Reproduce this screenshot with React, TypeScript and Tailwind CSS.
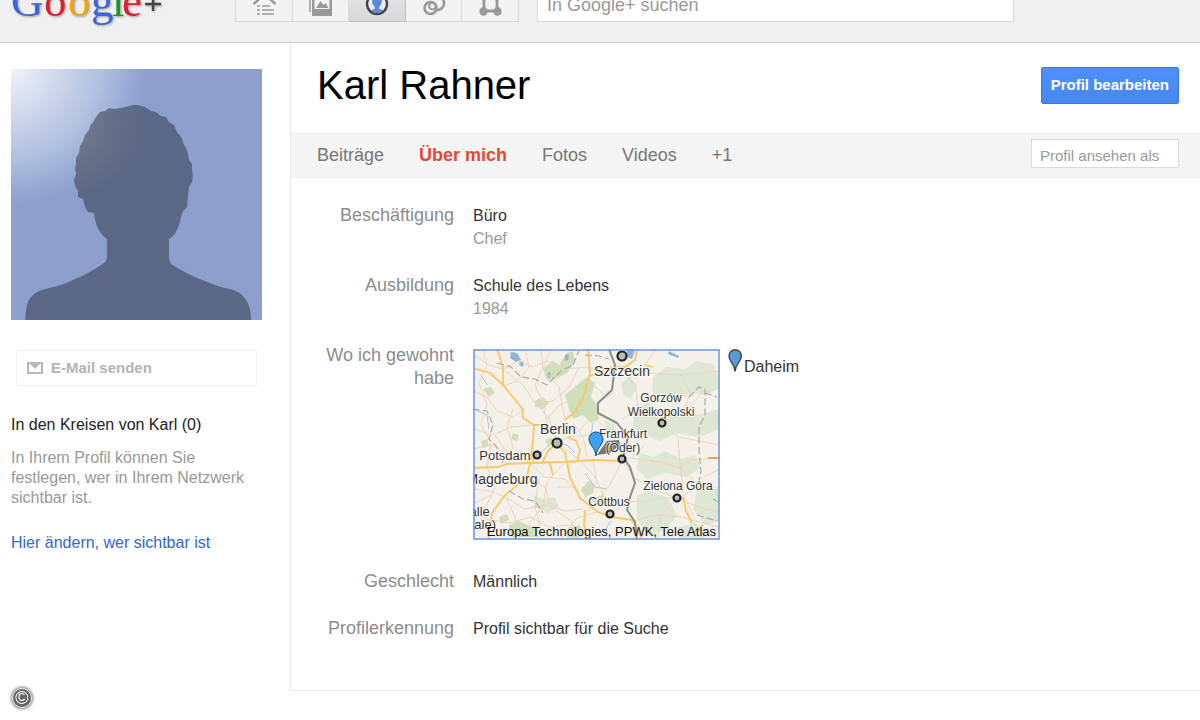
import type { ReactNode } from 'react';
import clsx from 'clsx';

const tabs = ['Beiträge', 'Über mich', 'Fotos', 'Videos', '+1'];

const logoLetters = [
  { char: 'G', x: 11, fill: '#3b66d6' },
  { char: 'o', x: 44, fill: '#dc1f33' },
  { char: 'o', x: 68, fill: '#f5a300' },
  { char: 'g', x: 91, fill: '#3b66d6' },
  { char: 'l', x: 112, fill: '#129a2c' },
  { char: 'e', x: 122, fill: '#dc1f33' },
];

function Logo() {
  return (
    <svg
      role="img"
      aria-label="Google+"
      viewBox="0 0 170 60"
      className="h-[60px] w-[170px] shrink-0 drop-shadow-[1px_1px_1px_rgba(0,0,0,0.35)]"
      fontFamily='"Liberation Serif", serif'
      fontSize="45"
    >
      {logoLetters.map((l) => (
        <text key={l.x} x={l.x} y="46" fill={l.fill}>
          {l.char}
        </text>
      ))}
      <path d="M145 34h16M153 26v15" stroke="#444" strokeWidth="2.4" />
    </svg>
  );
}

const navItems: { label: string; active?: boolean; icon: ReactNode }[] = [
  {
    label: 'Startseite',
    icon: (
      <>
        <path d="M1.500 12 12.500 2.500 23.500 12" fill="none" stroke="#999" strokeWidth="2.500" />
        <path d="M5 14h3M5 18h3M5 22h3M10 14h8M10 18h12M10 22h12" stroke="#999" strokeWidth="1.600" />
      </>
    ),
  },
  {
    label: 'Fotos',
    icon: (
      <>
        <path d="M2 2v18" stroke="#999" strokeWidth="1.500" />
        <path d="M4 3h20v21H4z" fill="#999" />
        <path d="M6.500 5h15v12h-15z" fill="#f3f3f3" />
        <path d="m8 16 4.500-7 3 4 2-2 3 5z" fill="#999" />
      </>
    ),
  },
  {
    label: 'Profil',
    active: true,
    icon: (
      <>
        <circle cx="12" cy="12" r="10" fill="#e8eefa" stroke="#444" strokeWidth="2.400" />
        <path
          d="M12 4c-3.500 0-5 2.500-4.800 5.500.2 2.500 1 4 2.600 5.200v2L5.500 18.500c3.500 3.200 9.500 3.200 13 0l-4.300-1.800v-2c1.600-1.200 2.400-2.700 2.600-5.200C17 6.500 15.500 4 12 4z"
          fill="#5c8ad6"
        />
      </>
    ),
  },
  {
    label: 'Circles',
    icon: (
      <g fill="none" stroke="#999" strokeWidth="2.600">
        <circle cx="8.500" cy="16" r="6" />
        <circle cx="10.500" cy="14" r="3.400" strokeWidth="2" />
        <path d="M8.500 7.500A7.200 7.200 0 1 1 15 18.200" />
      </g>
    ),
  },
  {
    label: 'Spiele',
    icon: (
      <>
        <path d="M6 5h13v14H6z" fill="none" stroke="#999" strokeWidth="3" />
        <g fill="#999">
          <circle cx="5.500" cy="4" r="4" />
          <circle cx="19.500" cy="4" r="4" />
          <circle cx="5.500" cy="19.500" r="4.200" />
          <circle cx="19.500" cy="19.500" r="4.200" />
        </g>
        <circle cx="12.500" cy="12" r="5" fill="#f3f3f3" />
      </>
    ),
  },
];

function TopBar() {
  return (
    <header className="flex h-[43px] items-end overflow-hidden border-b border-[#d2d2d2] bg-[#f0f0f0] pb-5">
      <div className="flex w-[235px] shrink-0 items-end">
        {/* the logo's descender hangs below the toolbar line */}
        <div className="-mb-2">
          <Logo />
        </div>
      </div>
      <nav className="flex w-[284px] shrink-0 border-l border-[#d9d9d9]">
        {navItems.map((item) => (
          <button
            key={item.label}
            type="button"
            aria-label={item.label}
            className={clsx(
              'flex h-9 flex-1 items-center justify-center border-r border-b',
              item.active
                ? 'border-[#bdbdbd] bg-linear-to-b from-[#e8e8e8] to-[#d8d8d8]'
                : 'border-[#d9d9d9] bg-[#f3f3f3]',
            )}
          >
            <svg viewBox="0 0 24 24" className="size-6 overflow-visible">
              {item.icon}
            </svg>
          </button>
        ))}
      </nav>
      <input
        type="search"
        aria-label="In Google+ suchen"
        placeholder="In Google+ suchen"
        className="mr-[186px] ml-[18px] h-9 min-w-0 flex-1 border border-[#d9d9d9] bg-white px-[9px] pt-0.5 text-lg leading-6 placeholder:text-[#999]"
      />
    </header>
  );
}

function Avatar() {
  return (
    <svg viewBox="0 0 251 251" className="block w-full" role="img" aria-label="Profilbild">
      <defs>
        <radialGradient id="glow" gradientUnits="userSpaceOnUse" cx="0" cy="0" r="135">
          <stop offset="0" stopColor="#f1f3fa" />
          <stop offset="0.300" stopColor="#d3dbed" />
          <stop offset="0.650" stopColor="#b1c1e0" />
          <stop offset="1" stopColor="#8c9fcd" />
        </radialGradient>
        <radialGradient id="hair" gradientUnits="userSpaceOnUse" cx="60" cy="55" r="75">
          <stop offset="0" stopColor="#737c8c" />
          <stop offset="1" stopColor="#5a6785" />
        </radialGradient>
      </defs>
      <path d="M0 0h251v251H0z" fill="url(#glow)" />
      <path
        fill="url(#hair)"
        d="M122 36l-8 2-10 2-6-1-4 3-5 1-4 5-3 5-3 4-1 4-4 5-2 6-3 5-1 7-3 5v6l-1 5 1 5-2 6 1 6 3 5v6l5 2 2 8 3 5 6 1c1 9 4 20 13 26v16q0 6-3 8-14 10-31 17-10 5-24 8-19 4-22 17-2 9-2 24h226q1-22-5-29-4-8-16-11-12-2-25-8-17-6-34-17-2-3-2-9v-16c7-4 10-12 12-22l2-6 4-4 1-10 1-10 3-5 1-7-1-5v-6l-3-4-1-6-2-6-3-5-1-5-5-6-3-7-5-3-3-5-5-1-5-4-5-1-6-4-7-2z"
      />
    </svg>
  );
}

function Sidebar() {
  return (
    <aside className="w-[290px] shrink-0 pt-[26px] pr-7 pl-[11px]">
      <Avatar />
      <button
        type="button"
        className="mx-[5px] mt-[30px] flex h-9 w-[241px] items-center gap-2 border border-[#f0f0f0] bg-white px-2.5 text-[15px] font-bold text-[#b3b3b3]"
      >
        <svg viewBox="0 0 16 12" className="h-3 w-4">
          <path d="M1 1h14v10H1z" fill="none" stroke="#b8b8b8" strokeWidth="2" />
          <path d="M3 2h10L8 7z" fill="#b8b8b8" />
        </svg>
        E-Mail senden
      </button>
      <h2 className="mt-[29px] leading-5 text-[#222]">In den Kreisen von Karl (0)</h2>
      <p className="mt-[13px] leading-5 text-[#999]">
        In Ihrem Profil können Sie festlegen, wer in Ihrem Netzwerk sichtbar ist.
      </p>
      <a href="#sichtbarkeit" className="mt-[25px] block leading-5 text-[#3366cc]">
        Hier ändern, wer sichtbar ist
      </a>
    </aside>
  );
}

const cities = [
  { x: 149, y: 7, r: 4.5 },
  { x: 84, y: 94, r: 4.5 },
  { x: 64, y: 106, r: 3.5 },
  { x: 149, y: 110, r: 3.5 },
  { x: 189, y: 74, r: 3.5 },
  { x: 204, y: 149, r: 3.5 },
  { x: 137, y: 165, r: 3.5 },
];

const places = [
  { name: 'Szczecin', x: 149, y: 27, size: 14 },
  { name: 'Berlin', x: 85, y: 85, size: 14 },
  { name: 'Potsdam', x: 32, y: 111, size: 13 },
  { name: 'Gorzów', x: 188, y: 53, size: 12 },
  { name: 'Wielkopolski', x: 188, y: 67, size: 12 },
  { name: 'Frankfurt', x: 150, y: 89, size: 12 },
  { name: '(Oder)', x: 150, y: 103, size: 12 },
  { name: 'Zielona Góra', x: 205, y: 141, size: 12 },
  { name: 'Cottbus', x: 136, y: 157, size: 12 },
  { name: 'Magdeburg', x: 29, y: 135, size: 14 },
  { name: 'Halle', x: 2, y: 167, size: 13 },
  { name: '(Saale)', x: 2, y: 180, size: 13 },
];

function PlacesMap() {
  return (
    <svg
      viewBox="0 0 247 191"
      className="block h-[191px] w-[247px] shrink-0"
      role="img"
      aria-label="Karte mit Wohnorten"
      fontFamily='"Liberation Sans", Arial, sans-serif'
    >
      <path d="M0 0h247v191H0z" fill="#f4f1ea" />
      {/* woodland */}
      <g fill="#cfdfba">
        <path d="M70 20l10-8 6 4 8-12 6-2 2 12-8 10-12 6-8 2zM92 46l12-10 10-8 8 6-4 14 6 8 2 14-8 4-8-8-10 4-4-10z" />
        <path d="M36 176l10-4 8 4 8 2 4 10H38zM108 140l8-8 6 4-2 8-8 4zM96 178l10-2 4 8-6 6-10-2zM62 52l8-4 6 6-6 6-8-2zM72 92l6-4 4 6-6 4zM118 150l12-4 4 8-10 4z" />
        <path d="M10 40l8-2 4 6-6 4zM8 92l6-2 2 6-6 4zM40 84l6 2-2 6-6-2zM26 168l8-3 2 6-8 4z" />
      </g>
      <g fill="#dde7d3">
        <path d="M180 28l14-10 18 2 12-8 18 4 5 20-12 10-18-2-12 8-14-6-12 2zM162 60l12-6 14 8 16-4 20 8 22-6v20l-20 8-22-4-18 8-16-8-10-6z" />
        <path d="M166 104l14 4 12-6 16 8 14-4 6 12-14 10-22-4-18 6-10-10zM164 146l12-4 18 6 10 18-10 14-20 6-10-16zM224 142l22-4v34l-14 4-12-16zM206 178l16-4 12 8-4 8h-24zM148 34l8-6 8 8-6 14-8-4zM132 72l10 4 2 12-10-4zM60 146l10 4 12-2 4 10-12 6-12-6z" />
      </g>
      {/* lakes and rivers */}
      <g fill="#8fb4e0">
        <path d="M38 3l6 1 4 7-5 2-6-4zM47 12l4 1-1 5-4-2zM154 0l8 1-3 9-5-2zM92 6l4-1-1 6-3 1zM74 24l3-1 1 5-3 1zM196 2l10 5-1 2-10-4z" />
      </g>
      <path
        fill="none"
        stroke="#a9c4e6"
        strokeWidth="1"
        d="M0 60l14 6 2 14M8 26l6 10M120 74l-2 12 8 8M84 94l10 2 8 8M138 172l-8 12M76 96l-12 12-10 4M112 124l10 14 12 2"
      />
      {/* minor roads */}
      <g fill="none" stroke="#efd3ba" strokeWidth="1">
        <path d="M0 6l16 10 14 4 16-8 14 6 14-6 18 8 22-2 20 10M0 42l14 6 10 14 16 6 12-8M10 0l4 16-8 18 8 22-6 20 10 18-4 24 8 20-10 22 4 30" />
        <path d="M30 20l20 16 12 18 18-2 16-14 10-20M52 0l4 18-12 14-16 6M68 0l2 18-8 18 8 18 4 20M0 80l20 6 18-8 22-2M22 86l12 18 24 10M0 100l18-4 18 10M84 94l-8-24-14-18M84 94l20-10 14-16 12-20M84 94l22 16 16 18 14 30" />
        <path d="M57 114l14 14 20 2 16 14M54 128l18 10 6 20 20 14 8 18M0 140l18 2 14 6 20 12 22-4 18 6 18-2M32 146l10 22 4 22M14 170l22 4 22-6 18 10 22-2M120 111l4 22-12 16M150 110l-12 24-12 16-12 12M150 110l10 18 20 12 24 9M137 165l18-12 26-2 24-3M118 68l20 14 12 26M95 88l22-2 20 8" />
        <path d="M149 18l14 20 2 22 24 14 16 14 2 30 4 30 9 18M149 18l24 6 34 2 40-4M172 16l10-15M189 74l22-10 16-18 20-8M205 88l42 8M157 109l30 4 20 6 10-8 30-2M207 119l18 16 22 8M204 149l-16 18-4 24M204 149l24 10 19 4M165 60l-16 10M210 148l20-20 17-8M160 172l24-6 24 2 38 10M172 96l-14 14M207 24l10 20-6 18" />
        <path d="M78 0l-8 20 16 18 6 33M100 74l10 14 4 20M92 113l-18 20-4 24-14 18M120 36l14 12 6-4M0 155l20-10M40 60l-6 18 6 20-8 20M66 128l-4 30 8 30M84 138l18 0M124 163l-20 6-16 20M100 50l-14 6-12 14" />
      </g>
      {/* motorways */}
      <g fill="none" stroke="#fbc663" strokeWidth="1.800" strokeLinejoin="round">
        <path d="M24 0l6 18v18l19 23 1 10 11 7h13M0 19l17 5 13 12M115 0l2 24-8 27-7 12-10 8M61 76l-1 15-3 23-3 14-22 18-13 18-4 27" />
        <path d="M0 119l25-1 8-3 24-1 35-1 28-2 29 1M92 104l5 24 10 21 18 14 14 5 20 3 10 19M112 161l-1 14 3 15M95 88l8 4 4 9-3 12M74 74l-2 8M84 94l8 10M84 94l-9 8-6 12M60 112l4-6M76 112l4 14" />
        <path d="M164 0l-2 11-10 7-17 1-18 8M172 16l8 2M210 148l3 14 6 12" />
      </g>
      <path d="M235 109h12" stroke="#f5a04b" strokeWidth="2" />
      <path
        d="M136 0l6 16-3 25-14 13v10l19 10 11 14-5 20 7 10 5 16-5 14-3 13 8 12 2 18"
        fill="none"
        stroke="#8c8c8c"
        strokeWidth="2"
        strokeLinejoin="round"
      />
      <g fill="none" stroke="#aaa" strokeWidth="1.200" strokeDasharray="7 3">
        <path d="M24 14l14 4 10 10 14 2 12 6 14-14 12-6 6-14M112 6l14 1 10 3M0 60l14 2 6 14-4 14 8 8 6 16M36 142l14 8 12 2 8 12" />
        <path d="M216 48l10-10 6 2v26l-6 12v24l2 20-4 20M232 44l12 4M224 166l20 6M240 150l7 4M220 184l10-8" />
      </g>
      <path d="M124 106l10-14 12-1 1 5-10 8z" fill="#222" fillOpacity="0.600" />
      <g fill="#bbb" stroke="#222" strokeWidth="2.200">
        {cities.map((c) => (
          <circle key={`${c.x}-${c.y}`} cx={c.x} cy={c.y} r={c.r} />
        ))}
      </g>
      <g fill="#333" textAnchor="middle" stroke="#fff" strokeOpacity="0.700" strokeWidth="2" paintOrder="stroke">
        {places.map((p) => (
          <text key={p.name} x={p.x} y={p.y} fontSize={p.size}>
            {p.name}
          </text>
        ))}
      </g>
      <path d="M123 107c-1-9-7-11-7-17a7 7 0 0 1 14 0c0 6-6 8-7 17z" fill="#3d9ff0" stroke="#1f4f7c" />
      <text x="243" y="187" fontSize="13" textAnchor="end" fill="#111">
        Europa Technologies, PPWK, Tele Atlas
      </text>
      <path d="M1 1h245v189H1z" fill="none" stroke="#6f98e0" strokeWidth="1.500" />
    </svg>
  );
}

function Field({ label, children }: { label: string; children: ReactNode }) {
  return (
    <div className="flex gap-[19px] leading-[23px]">
      <dt className="w-[138px] shrink-0 text-right text-lg leading-[23px] text-[#8c8c8c]">{label}</dt>
      <dd className="text-[#333]">{children}</dd>
    </div>
  );
}

function Profile() {
  return (
    <main className="min-w-0 flex-1 border-b border-l border-[#ebebeb]">
      <div className="flex h-[90px] items-start justify-between pt-6 pr-[21px] pl-[26px]">
        <h1 className="text-[40px] leading-9 text-black">Karl Rahner</h1>
        <button
          type="button"
          className="h-[37px] rounded-[2px] border border-[#3079ed] bg-linear-to-b from-[#4d90fe] to-[#4787ed] px-[9px] text-[15px] font-bold text-white"
        >
          Profil bearbeiten
        </button>
      </div>
      <div className="flex h-[45px] items-center justify-between border-y border-[#efefef] bg-[#f4f4f4] pr-[21px] pl-[26px]">
        <nav className="flex gap-[35px] pb-px text-lg">
          {tabs.map((tab) => (
            <a
              key={tab}
              href="#profil"
              className={tab === 'Über mich' ? 'font-bold text-[#dd4b39]' : 'text-[#777]'}
            >
              {tab}
            </a>
          ))}
        </nav>
        <input
          type="text"
          aria-label="Profil ansehen als"
          placeholder="Profil ansehen als"
          className="mb-1 h-[29px] w-[148px] border border-[#dadada] bg-white px-2 pt-1 text-[15px] placeholder:text-[#999]"
        />
      </div>
      <dl className="flex flex-col gap-6 pt-[26px] pb-[50px] pl-[25px]">
        <Field label="Beschäftigung">
          Büro
          <span className="block text-[#999]">Chef</span>
        </Field>
        <Field label="Ausbildung">
          Schule des Lebens
          <span className="block text-[#999]">1984</span>
        </Field>
        <Field label="Wo ich gewohnt habe">
          <div className="flex gap-2 pt-[5px] pb-1.5">
            <PlacesMap />
            <div className="flex items-start">
              <svg viewBox="0 0 16 24" className="h-6 w-4">
                <path
                  d="M7 22.500C6.500 14 1 13 1 7a6.200 6.200 0 0 1 12.400 0c0 6-5.900 7-6.400 15.500z"
                  fill="#5b9bd5"
                  stroke="#444"
                  strokeWidth="1.400"
                />
              </svg>
              <span className="pt-1.5">Daheim</span>
            </div>
          </div>
        </Field>
        <Field label="Geschlecht">Männlich</Field>
        <Field label="Profilerkennung">Profil sichtbar für die Suche</Field>
      </dl>
    </main>
  );
}

export default function App() {
  return (
    <div className="min-h-screen bg-white font-['Liberation_Sans',Arial,sans-serif] text-base">
      <TopBar />
      <div className="flex">
        <Sidebar />
        <Profile />
      </div>
      <span className="fixed bottom-3 left-3 flex size-5 items-center justify-center rounded-full border border-[#eee] bg-[#666] text-lg leading-none text-white shadow-[0_0_3px_1px_rgba(0,0,0,0.5)]">
        ©
      </span>
    </div>
  );
}
